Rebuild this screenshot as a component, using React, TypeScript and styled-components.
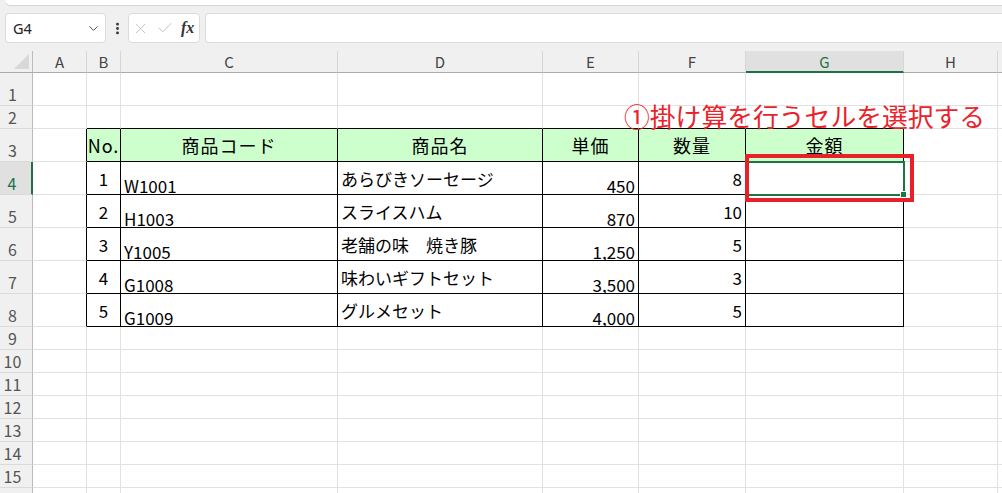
import React from 'react';
import styled, { createGlobalStyle } from 'styled-components';
import { ChevronDown, EllipsisVertical, X, Check } from 'lucide-react';

const GlobalStyle = createGlobalStyle`
  html, body {
    margin: 0;
    padding: 0;
    background: #f0f0f0;
    overflow: hidden;
  }
  body {
    font-family: "Noto Sans CJK JP", "Noto Sans", sans-serif;
  }
`;

const Page = styled.div`
  width: 1002px;
  height: 493px;
  overflow: hidden;
  background: #f0f0f0;
`;

const Ribbon = styled.div`
  height: 5px;
  margin: 0 -10px 0 5px;
  background: #fff;
  border-radius: 0 0 6px 6px;
  box-shadow: 0 1px 1px rgba(0, 0, 0, 0.12);
`;

const FormulaBar = styled.div`
  display: flex;
  align-items: center;
  height: 30px;
  margin: 8px -10px 8px 5px;
`;

const Field = styled.div<{ $w?: number }>`
  box-sizing: border-box;
  height: 30px;
  display: flex;
  align-items: center;
  background: #fff;
  border: 1px solid #dcdcdc;
  border-radius: 4px;
  ${p => (p.$w ? `width: ${p.$w}px;` : 'flex: 1;')}
`;

const NameText = styled.span`
  flex: 1;
  padding-left: 7px;
  font-family: "Noto Sans", sans-serif;
  font-size: 14.5px;
  color: #222;
`;

const Dots = styled.div`
  width: 22px;
  display: flex;
  justify-content: center;
  color: #333;
`;

const FxIcons = styled.div`
  display: flex;
  align-items: center;
  gap: 7px;
  padding-left: 3px;
  color: #bdbdbd;
`;

const Fx = styled.span`
  font-family: "Liberation Serif", serif;
  font-style: italic;
  font-weight: bold;
  font-size: 16px;
  color: #333;
`;

const Sheet = styled.div`
  position: relative;
  display: grid;
  grid-template-columns: 33px 54px 34px 217px 205px 96px 107px 158px 94px 1fr;
  grid-template-rows: 22px 33px 23px repeat(6, 33px) repeat(8, 23px);
  background: #fff;
`;

const Corner = styled.div`
  box-sizing: border-box;
  display: flex;
  align-items: flex-end;
  justify-content: flex-end;
  padding: 0 3px 3px 0;
  background: #f0f0f0;
  border-right: 1px solid #bcbcbc;
  border-bottom: 1px solid #ababab;
`;

const Triangle = styled.div`
  width: 0;
  height: 0;
  border-left: 15px solid transparent;
  border-bottom: 15px solid #d8d8d8;
`;

const ColHead = styled.div<{ $active?: boolean }>`
  box-sizing: border-box;
  display: flex;
  align-items: center;
  justify-content: center;
  background: ${p => (p.$active ? '#e0e0e0' : '#f0f0f0')};
  border-right: 1px solid #d6d6d6;
  border-bottom: ${p => (p.$active ? '2px solid #1e7145' : '1px solid #ababab')};
  font-size: 15px;
  color: ${p => (p.$active ? '#1e7145' : '#444')};
`;

const RowHead = styled.div<{ $active?: boolean }>`
  box-sizing: border-box;
  display: flex;
  align-items: flex-end;
  justify-content: center;
  padding: 0 7px 3px 0;
  background: ${p => (p.$active ? '#e0e0e0' : '#f0f0f0')};
  border-right: ${p => (p.$active ? '2px solid #1e7145' : '1px solid #bcbcbc')};
  border-bottom: 1px solid #dadada;
  font-size: 16px;
  line-height: 1;
  color: ${p => (p.$active ? '#1e7145' : '#555')};
`;

type Align = 'left' | 'center' | 'right';
type VAlign = 'middle' | 'bottom';

const Cell = styled.div<{
  $right: string;
  $bottom: string;
  $bg: string;
  $align: Align;
  $valign: VAlign;
  $head?: boolean;
}>`
  position: relative;
  box-sizing: border-box;
  display: flex;
  align-items: ${p => (p.$valign === 'bottom' ? 'flex-end' : 'center')};
  justify-content: ${p =>
    p.$align === 'left' ? 'flex-start' : p.$align === 'right' ? 'flex-end' : 'center'};
  padding: 0 3px 0 3px;
  background: ${p => p.$bg};
  border-right: 1px solid ${p => p.$right};
  border-bottom: 1px solid ${p => p.$bottom};
  font-size: ${p => (p.$head ? '18px' : '17px')};
  letter-spacing: ${p => (p.$head ? '1px' : '0')};
  line-height: 1;
  color: #000;
  white-space: nowrap;
`;

const Selection = styled.div`
  position: absolute;
  top: -1px;
  left: -1px;
  right: -2px;
  bottom: -2px;
  border: 2px solid #217346;
  z-index: 2;
`;

const Handle = styled.div`
  position: absolute;
  right: -4px;
  bottom: -4px;
  width: 5px;
  height: 5px;
  background: #217346;
  border: 1px solid #fff;
`;

const Callout = styled.div`
  position: absolute;
  top: -8px;
  left: -1px;
  right: -11px;
  bottom: -8px;
  border: 4px solid #e8202a;
  z-index: 3;
`;

const Note = styled.div`
  position: absolute;
  left: 624px;
  top: 52px;
  font-size: 25.8px;
  line-height: 1;
  color: #e8232b;
  white-space: nowrap;
  z-index: 3;
`;

const columns = ['A', 'B', 'C', 'D', 'E', 'F', 'G', 'H', ''];
const ROWS = 16;
const LABELLED = 15;

const header = ['No.', '商品コード', '商品名', '単価', '数量', '金額'];
const items = [
  ['1', 'W1001', 'あらびきソーセージ', '450', '8'],
  ['2', 'H1003', 'スライスハム', '870', '10'],
  ['3', 'Y1005', '老舗の味　焼き豚', '1,250', '5'],
  ['4', 'G1008', '味わいギフトセット', '3,500', '3'],
  ['5', 'G1009', 'グルメセット', '4,000', '5'],
];

// column index: 0=A .. 8=I ; table lives in B..G (1..6), rows 3..8
const cellText = (row: number, col: number): string => {
  if (row === 3 && col >= 1 && col <= 6) return header[col - 1];
  if (row >= 4 && row <= 8 && col >= 1 && col <= 5) return items[row - 4][col - 1];
  return '';
};

const cellAlign = (row: number, col: number): [Align, VAlign] => {
  if (row === 3) return ['center', 'middle'];
  if (col === 1) return ['center', 'middle'];
  if (col === 2) return ['left', 'bottom'];
  if (col === 3) return ['left', 'middle'];
  if (col === 4) return ['right', 'bottom'];
  if (col === 5) return ['right', 'middle'];
  return ['left', 'bottom'];
};

export default function App() {
  const rows = Array.from({ length: ROWS }, (_, i) => i + 1);
  return (
    <Page>
      <GlobalStyle />
      <Ribbon />
      <FormulaBar>
        <Field $w={101}>
          <NameText>G4</NameText>
          <ChevronDown size={15} strokeWidth={1.5} color="#444" style={{ marginRight: 4 }} />
        </Field>
        <Dots>
          <EllipsisVertical size={15} strokeWidth={2.6} />
        </Dots>
        <Field $w={72}>
          <FxIcons>
            <X size={17} strokeWidth={1.2} />
            <Check size={18} strokeWidth={1.2} />
            <Fx>fx</Fx>
          </FxIcons>
        </Field>
        <Field style={{ marginLeft: 5 }} />
      </FormulaBar>

      <Sheet>
        <Corner>
          <Triangle />
        </Corner>
        {columns.map((c, i) => (
          <ColHead key={'h' + i} $active={c === 'G'}>
            {c}
          </ColHead>
        ))}
        {rows.map(r => (
          <React.Fragment key={r}>
            <RowHead $active={r === 4}>{r <= LABELLED ? r : ''}</RowHead>
            {columns.map((_, c) => {
              const inTable = r >= 3 && r <= 8 && c >= 1 && c <= 6;
              const right = inTable || (r >= 3 && r <= 8 && c === 0) ? '#000' : '#e1e1e1';
              const bottom = inTable || (r === 2 && c >= 1 && c <= 6) ? '#000' : '#e1e1e1';
              const [align, valign] = cellAlign(r, c);
              const selected = r === 4 && c === 6;
              return (
                <Cell
                  key={c}
                  $right={right}
                  $bottom={bottom}
                  $bg={r === 3 && inTable ? '#ccffcc' : '#fff'}
                  $align={align}
                  $valign={valign}
                  $head={r === 3}
                >
                  {cellText(r, c)}
                  {selected && (
                    <>
                      <Selection>
                        <Handle />
                      </Selection>
                      <Callout />
                    </>
                  )}
                </Cell>
              );
            })}
          </React.Fragment>
        ))}
        <Note>①掛け算を行うセルを選択する</Note>
      </Sheet>
    </Page>
  );
}
